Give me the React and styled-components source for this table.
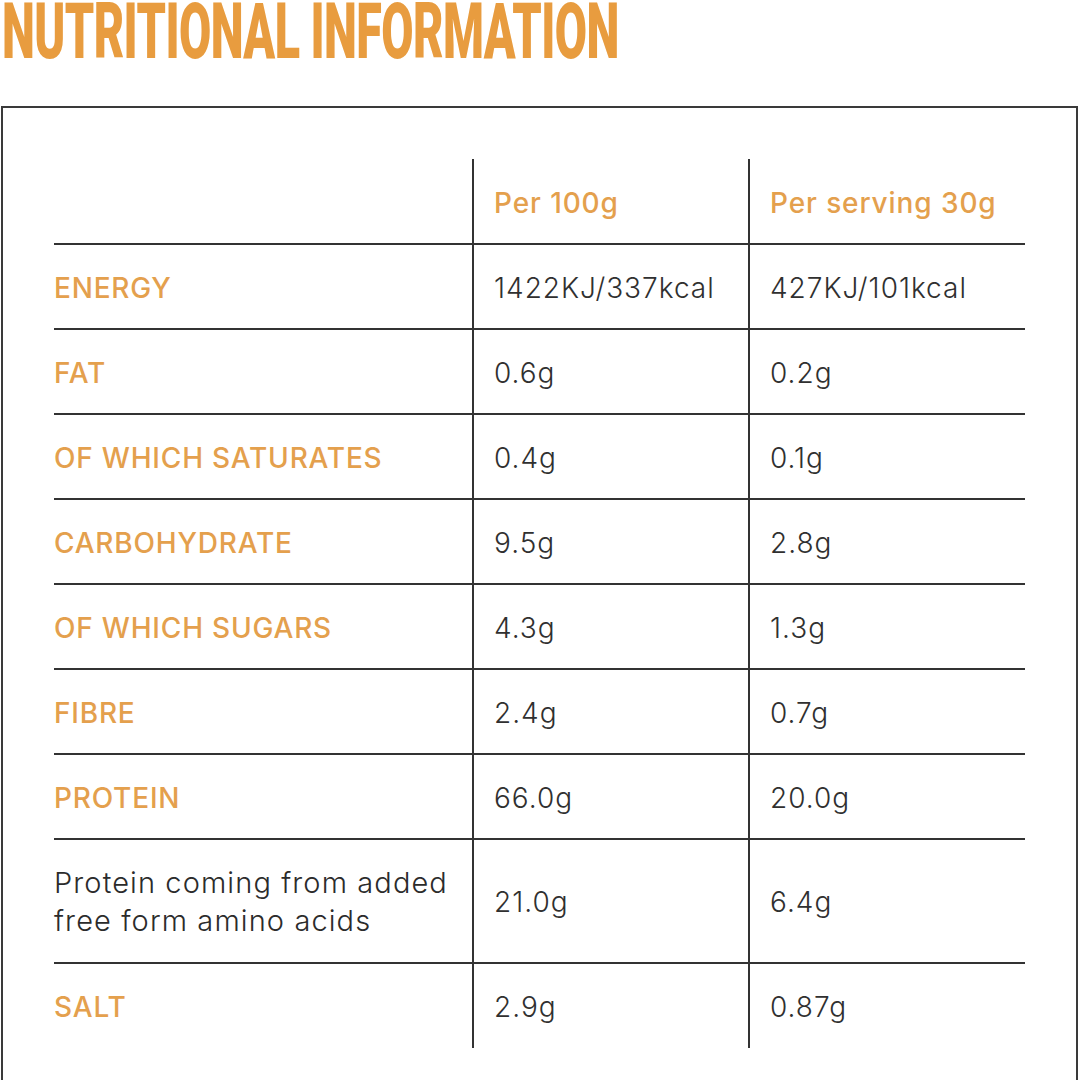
import React from 'react'
import styled, { createGlobalStyle } from 'styled-components';

const GlobalStyle = createGlobalStyle`
    html, body {
        margin: 0;
        padding: 0;
        background: #ffffff;
    }
    body {
        font-family: Inter, "Noto Sans", sans-serif;
        color: #2b2b2b;
    }
`;

const Page = styled.div`
    width: 1080px;
    height: 1080px;
    overflow: hidden;
`;

const TitleBar = styled.div`
    height: 106px;
    padding: 0 0 0 2px;
    box-sizing: border-box;
`;

const Title = styled.h1`
    margin: 0;
    display: inline-block;
    font-family: Roboto, "Liberation Sans", sans-serif;
    font-weight: 900;
    font-size: 78px;
    line-height: 64px;
    letter-spacing: -1px;
    color: #e89c3f;
    white-space: nowrap;
    transform: scaleX(0.6);
    transform-origin: left top;
`;

const Box = styled.div`
    margin: 0 2px 0 1px;
    border: 2px solid #3a3a3a;
    border-bottom: none;
    padding: 51px 51px 40px 51px;
    height: 1000px;
    box-sizing: border-box;
`;

const Table = styled.table`
    width: 971px;
    border-collapse: collapse;
    table-layout: fixed;
`;

const Row = styled.tr`
    height: ${p => p.tall ? 124 : 85}px;
    border-bottom: ${p => p.last ? 'none' : '2px solid #333'};
`;

const Cell = styled.td`
    padding: 2px 0 0 ${p => p.first ? 0 : 20}px;
    border-left: ${p => p.first ? 'none' : '2px solid #333'};
    vertical-align: middle;
    font-size: 28px;
    line-height: 38px;
    font-weight: 300;
    color: #303030;
    letter-spacing: 1px;
`;

const Label = styled(Cell)`
    font-weight: 500;
    color: #e4a04d;
    text-transform: uppercase;
    letter-spacing: 0.8px;
`;

const Note = styled(Cell)`
    font-weight: 300;
    color: #2b2b2b;
    letter-spacing: 1.1px;
    font-size: 29px;
`;

const Head = styled(Cell)`
    font-weight: 500;
    color: #e4a04d;
    letter-spacing: 0.9px;
    padding-top: 4px;
`;

const rows = [
    ['Energy', '1422KJ/337kcal', '427KJ/101kcal'],
    ['Fat', '0.6g', '0.2g'],
    ['Of which saturates', '0.4g', '0.1g'],
    ['Carbohydrate', '9.5g', '2.8g'],
    ['Of which sugars', '4.3g', '1.3g'],
    ['Fibre', '2.4g', '0.7g'],
    ['Protein', '66.0g', '20.0g'],
];

export default function App() {
    return (
        <Page>
            <GlobalStyle />
            <TitleBar>
                <Title>NUTRITIONAL INFORMATION</Title>
            </TitleBar>
            <Box>
                <Table>
                    <colgroup>
                        <col style={{ width: 419 }} />
                        <col style={{ width: 276 }} />
                        <col style={{ width: 276 }} />
                    </colgroup>
                    <tbody>
                        <Row>
                            <Cell first></Cell>
                            <Head>Per 100g</Head>
                            <Head>Per serving 30g</Head>
                        </Row>
                        {rows.map(r => (
                            <Row key={r[0]}>
                                <Label first>{r[0]}</Label>
                                <Cell>{r[1]}</Cell>
                                <Cell>{r[2]}</Cell>
                            </Row>
                        ))}
                        <Row tall>
                            <Note first>Protein coming from added<br />free form amino acids</Note>
                            <Cell>21.0g</Cell>
                            <Cell>6.4g</Cell>
                        </Row>
                        <Row last>
                            <Label first>Salt</Label>
                            <Cell>2.9g</Cell>
                            <Cell>0.87g</Cell>
                        </Row>
                    </tbody>
                </Table>
            </Box>
        </Page>
    )
}
